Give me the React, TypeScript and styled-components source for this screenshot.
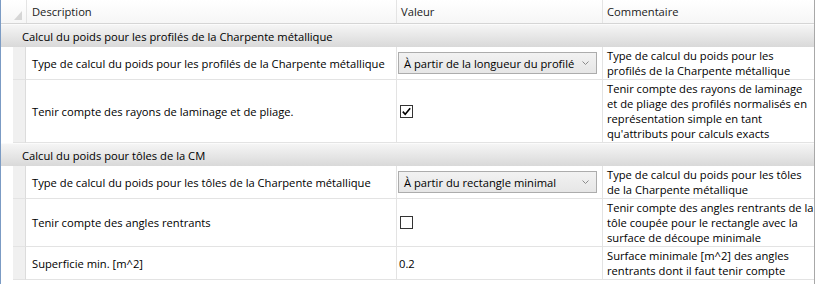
import React from 'react';
import styled, { createGlobalStyle } from 'styled-components';

const GlobalStyle = createGlobalStyle`
  html, body {
    margin: 0;
    padding: 0;
    background: #ffffff;
  }
  body {
    font-family: 'Open Sans', 'Noto Sans', 'Liberation Sans', sans-serif;
    font-size: 11.2px;
    color: #000000;
  }
`;

const Grid = styled.div`
  width: 813px;
  height: 284px;
  border-left: 1px solid #7b9bc4;
  border-right: 1px solid #a8a8a8;
  overflow: hidden;
  background: #ffffff;
`;

const HeaderRow = styled.div`
  display: grid;
  grid-template-columns: 26px 370px 206px 1fr;
  height: 23px;
  border-bottom: 1px solid #d5d5d5;
  background: linear-gradient(#ffffff, #f6f6f6);
`;

const HeaderCell = styled.div<{ $pad?: number }>`
  display: flex;
  align-items: center;
  padding-left: ${({ $pad }) => $pad ?? 4}px;
  border-right: 1px solid #e4e4e4;
  color: #1a1a1a;
  white-space: nowrap;
  &:last-child {
    border-right: none;
  }
`;

const Corner = styled.div`
  display: flex;
  align-items: flex-end;
  justify-content: flex-end;
  padding: 0 4px 3px 0;
  border-right: 1px solid #e4e4e4;
`;

const GroupRow = styled.div`
  height: 23px;
  display: flex;
  align-items: center;
  padding-left: 21px;
  background: linear-gradient(#f5f5f5, #d9d9d9);
  border-top: 1px solid #fbfbfb;
  box-sizing: border-box;
  white-space: nowrap;
`;

const Row = styled.div`
  display: grid;
  grid-template-columns: 12px 13px 371px 206px 1fr;
`;

const Blank = styled.div`
  background: #ffffff;
`;

const Strip = styled.div`
  background: #f0f0f0;
  border-right: 1px solid #dcdcdc;
  border-bottom: 1px solid #e3e3e3;
`;

const DescCell = styled.div`
  display: flex;
  align-items: center;
  padding-left: 6px;
  border-right: 1px solid #e3e3e3;
  border-bottom: 1px solid #e3e3e3;
  white-space: nowrap;
`;

const ValueCell = styled.div`
  display: flex;
  align-items: center;
  padding-left: 1px;
  border-right: 1px solid #e3e3e3;
  border-bottom: 1px solid #e3e3e3;
`;

const PlainValue = styled.span`
  padding-left: 1px;
`;

const CommentCell = styled.div`
  padding: 1px 0 1px 4px;
  line-height: 15px;
  border-bottom: 1px solid #e3e3e3;
  white-space: nowrap;
`;

const Combo = styled.div`
  width: 199px;
  height: 22px;
  box-sizing: border-box;
  display: flex;
  align-items: center;
  justify-content: space-between;
  padding: 0 7px 0 5px;
  border: 1px solid #acacac;
  background: linear-gradient(#f2f2f2, #e6e6e6);
  white-space: nowrap;
`;

const Check = styled.div`
  width: 13px;
  height: 13px;
  margin-left: 2px;
  box-sizing: border-box;
  border: 1px solid #333333;
  background: #ffffff;
  display: flex;
  align-items: center;
  justify-content: center;
`;

const Chevron = () => (
  <svg width="7" height="5" viewBox="0 0 7 5">
    <path d="M0.5 0.5 L3.5 3.5 L6.5 0.5" fill="none" stroke="#8a8a8a" strokeWidth="1" />
  </svg>
);

const Tick = () => (
  <svg width="11" height="11" viewBox="0 0 11 11">
    <path d="M1.8 5.6 L4.2 8.2 L9.2 2.2" fill="none" stroke="#000000" strokeWidth="1.6" />
  </svg>
);

type Item = {
  desc: string;
  value: React.ReactNode;
  comment: string[];
};

const groups: { title: string; items: Item[] }[] = [
  {
    title: 'Calcul du poids pour les profilés de la Charpente métallique',
    items: [
      {
        desc: 'Type de calcul du poids pour les profilés de la Charpente métallique',
        value: (
          <Combo>
            <span>À partir de la longueur du profilé</span>
            <Chevron />
          </Combo>
        ),
        comment: ['Type de calcul du poids pour les', 'profilés de la Charpente métallique'],
      },
      {
        desc: 'Tenir compte des rayons de laminage et de pliage.',
        value: (
          <Check>
            <Tick />
          </Check>
        ),
        comment: [
          'Tenir compte des rayons de laminage',
          'et de pliage des profilés normalisés en',
          'représentation simple en tant',
          "qu'attributs pour calculs exacts",
        ],
      },
    ],
  },
  {
    title: 'Calcul du poids pour tôles de la CM',
    items: [
      {
        desc: 'Type de calcul du poids pour les tôles de la Charpente métallique',
        value: (
          <Combo>
            <span>À partir du rectangle minimal</span>
            <Chevron />
          </Combo>
        ),
        comment: ['Type de calcul du poids pour les tôles', 'de la Charpente métallique'],
      },
      {
        desc: 'Tenir compte des angles rentrants',
        value: <Check />,
        comment: [
          'Tenir compte des angles rentrants de la',
          'tôle coupée pour le rectangle avec la',
          'surface de découpe minimale',
        ],
      },
      {
        desc: 'Superficie min. [m^2]',
        value: <PlainValue>0.2</PlainValue>,
        comment: ['Surface minimale [m^2] des angles', 'rentrants dont il faut tenir compte'],
      },
    ],
  },
];

export default function App() {
  return (
    <>
      <GlobalStyle />
      <Grid>
        <HeaderRow>
          <Corner>
            <svg width="8" height="9" viewBox="0 0 8 9">
              <path d="M8 0 L8 9 L0 9 Z" fill="#d6d6d6" />
            </svg>
          </Corner>
          <HeaderCell $pad={5}>Description</HeaderCell>
          <HeaderCell>Valeur</HeaderCell>
          <HeaderCell>Commentaire</HeaderCell>
        </HeaderRow>
        {groups.map((g) => (
          <React.Fragment key={g.title}>
            <GroupRow>{g.title}</GroupRow>
            {g.items.map((it) => (
              <Row key={it.desc}>
                <Blank />
                <Strip />
                <DescCell>{it.desc}</DescCell>
                <ValueCell>{it.value}</ValueCell>
                <CommentCell>
                  {it.comment.map((line, i) => (
                    <div key={i}>{line}</div>
                  ))}
                </CommentCell>
              </Row>
            ))}
          </React.Fragment>
        ))}
      </Grid>
    </>
  );
}
